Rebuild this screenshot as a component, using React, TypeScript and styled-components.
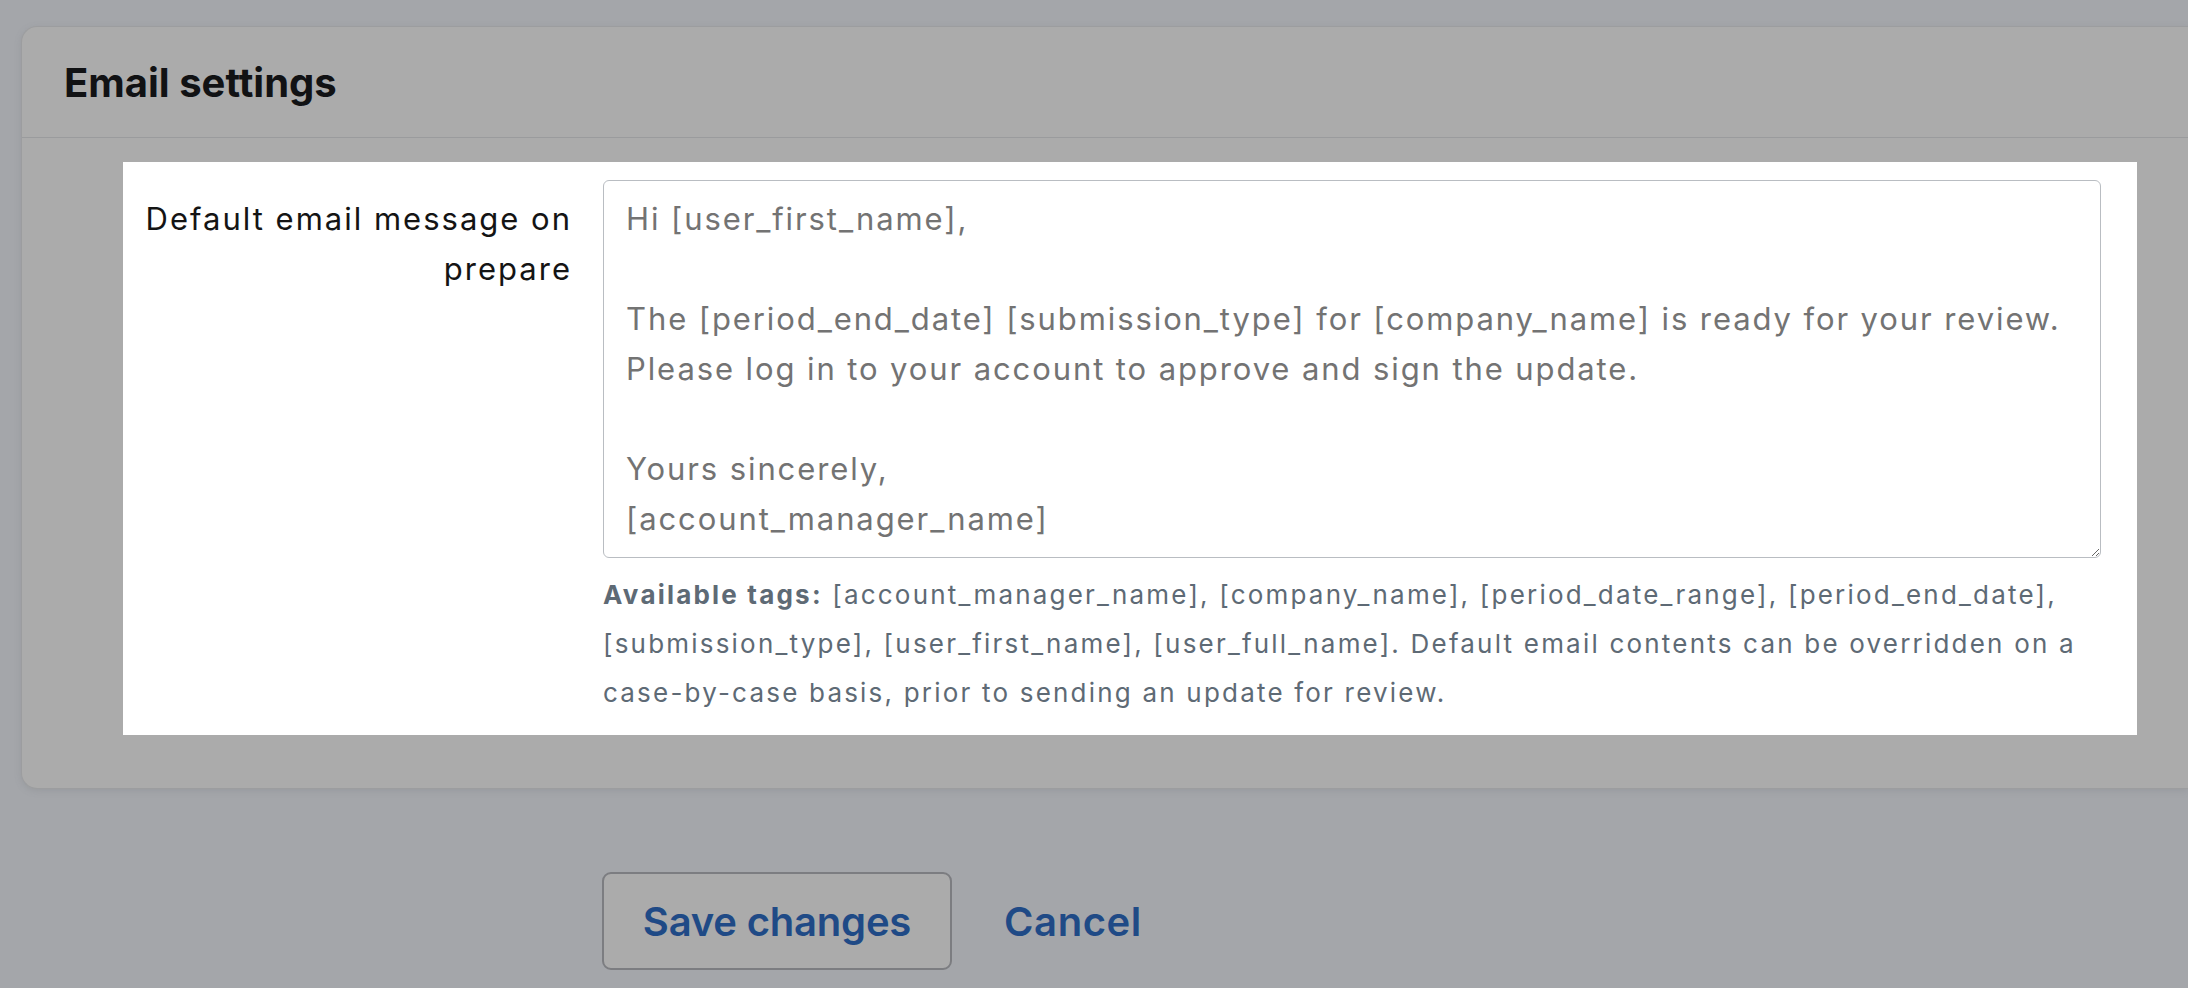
import React from 'react';
import styled, { createGlobalStyle } from 'styled-components';

const GlobalStyle = createGlobalStyle`
  html, body {
    margin: 0;
    padding: 0;
    background: #a4a6aa;
    overflow: hidden;
  }
  body {
    font-family: Inter, Lato, "Liberation Sans", sans-serif;
    color: #111;
  }
  * {
    box-sizing: border-box;
  }
`;

const Page = styled.div`
  padding: 26px 0 0 21px;
  min-height: 988px;
`;

const Card = styled.section`
  background: #ababab;
  border: 1px solid #9c9d9f;
  border-right: none;
  border-radius: 16px 0 0 16px;
  box-shadow: 0 2px 6px rgba(120, 122, 128, 0.25);
`;

const CardHeader = styled.div`
  display: flex;
  align-items: center;
  height: 111px;
  padding-left: 42px;
  border-bottom: 1px solid #9a9b9d;
`;

const Title = styled.h2`
  margin: 0;
  font-size: 40px;
  font-weight: 700;
  color: #111214;
`;

const CardBody = styled.div`
  padding: 24px 0 53px 101px;
`;

const FieldPanel = styled.div`
  display: grid;
  grid-template-columns: 449px 1498px;
  column-gap: 31px;
  width: 2014px;
  padding: 18px 36px 18px 0;
  background: #fff;
`;

const Label = styled.label`
  padding-top: 14px;
  text-align: right;
  font-size: 31px;
  line-height: 50px;
  letter-spacing: 2px;
  color: #141414;
`;

const Field = styled.div`
  display: flex;
  flex-direction: column;
`;

const MessageInput = styled.textarea`
  width: 100%;
  height: 378px;
  padding: 13px 8px 13px 22px;
  border: 1px solid #b9bdc2;
  border-radius: 6px;
  font-family: inherit;
  font-size: 31px;
  line-height: 50px;
  letter-spacing: 1.9px;
  color: #737373;
  background: #fff;
  outline: none;
  overflow: hidden;
`;

const HelpText = styled.p`
  margin: 12px 0 0;
  font-size: 26px;
  line-height: 49px;
  letter-spacing: 2.2px;
  color: #5e6a75;
  white-space: nowrap;

  strong {
    font-weight: 700;
  }
`;

const Actions = styled.div`
  display: flex;
  align-items: center;
  gap: 52px;
  padding: 83px 0 0 581px;
`;

const SaveButton = styled.button`
  width: 350px;
  height: 98px;
  border: 2px solid #7c7d81;
  border-radius: 9px;
  background: #ababab;
  color: #1f4a86;
  font-family: inherit;
  font-size: 40px;
  font-weight: 600;
  letter-spacing: -0.2px;
  cursor: pointer;
`;

const LinkButton = styled.button`
  padding: 0;
  border: none;
  background: none;
  color: #1f4a86;
  font-family: inherit;
  font-size: 40px;
  font-weight: 600;
  letter-spacing: 0.6px;
  cursor: pointer;
`;

const defaultMessage = `Hi [user_first_name],

The [period_end_date] [submission_type] for [company_name] is ready for your review.
Please log in to your account to approve and sign the update.

Yours sincerely,
[account_manager_name]`;

export default function App() {
  return (
    <>
      <GlobalStyle />
      <Page>
        <Card>
          <CardHeader>
            <Title>Email settings</Title>
          </CardHeader>
          <CardBody>
            <FieldPanel>
              <Label htmlFor="prepare-message">
                Default email message on
                <br />
                prepare
              </Label>
              <Field>
                <MessageInput id="prepare-message" defaultValue={defaultMessage} />
                <HelpText>
                  <strong>Available tags:</strong> [account_manager_name], [company_name],
                  [period_date_range], [period_end_date],
                  <br />
                  [submission_type], [user_first_name], [user_full_name]. Default email contents
                  can be overridden on a
                  <br />
                  case-by-case basis, prior to sending an update for review.
                </HelpText>
              </Field>
            </FieldPanel>
          </CardBody>
        </Card>
        <Actions>
          <SaveButton type="button">Save changes</SaveButton>
          <LinkButton type="button">Cancel</LinkButton>
        </Actions>
      </Page>
    </>
  );
}
